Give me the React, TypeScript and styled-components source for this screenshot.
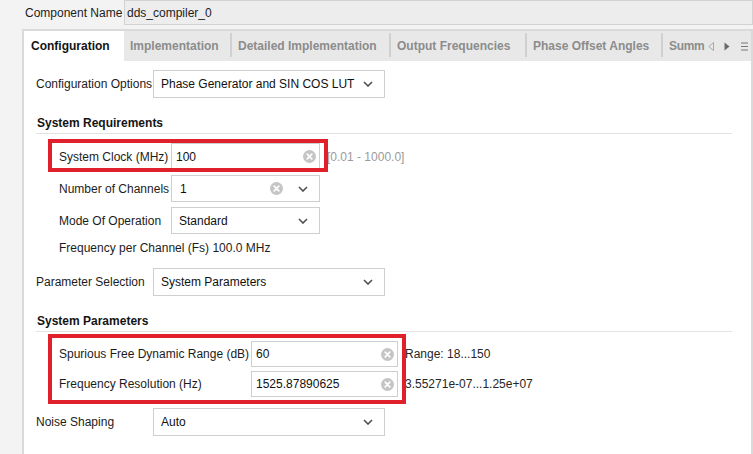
import React from 'react';
import styled, { createGlobalStyle } from 'styled-components';

const GlobalStyle = createGlobalStyle`
  html, body {
    margin: 0;
    padding: 0;
    background: #f3f3f3;
  }
  body {
    font-family: "Liberation Sans", Arial, sans-serif;
    font-size: 12px;
    color: #1c1c1c;
    overflow: hidden;
  }
`;

const Page = styled.div`
  width: 753px;
  height: 454px;
  overflow: hidden;
  background: #f3f3f3;
`;

const NameRow = styled.div`
  display: flex;
  align-items: center;
  height: 25px;
  padding-left: 25px;
`;

const NameLabel = styled.span`
  width: 99px;
`;

const NameInput = styled.div`
  flex: 1;
  height: 25px;
  box-sizing: border-box;
  border: 1px solid #d2d2d2;
  background: #ededed;
  display: flex;
  align-items: center;
  padding-left: 2px;
`;

const Panel = styled.div`
  margin: 4px 0 0 22px;
  height: 440px;
  border: 2px solid #dadada;
  display: flex;
  flex-direction: column;
`;

const TabBar = styled.div`
  display: flex;
  height: 30px;
  background: #e8e8e8;
`;

const Tab = styled.div<{ $w?: number; $active?: boolean }>`
  ${p => (p.$w ? `width: ${p.$w}px;` : 'flex: 1; min-width: 0;')}
  box-sizing: border-box;
  display: flex;
  align-items: center;
  padding-left: ${p => (p.$active ? 7 : 6)}px;
  font-weight: bold;
  white-space: nowrap;
  color: ${p => (p.$active ? '#141414' : '#8c8c8c')};
  background: ${p => (p.$active ? '#ffffff' : 'transparent')};
`;

const TabSep = styled.span`
  width: 2px;
  margin: 2px 0 4px;
  background: #d0d0d0;
`;

const ShortLabel = styled.span`
  flex: 1;
  letter-spacing: -0.3px;
`;

const TabNav = styled.div`
  display: flex;
  align-items: center;
  flex-shrink: 0;
  padding-right: 3px;
`;

const NavIcon = styled.svg<{ $ml: number }>`
  margin-left: ${p => p.$ml}px;
  display: block;
`;

const Content = styled.div`
  flex: 1;
  background: #ffffff;
  padding: 9px 19px 0 12px;
  display: flex;
  flex-direction: column;
`;

const TopField = styled.div<{ $mt?: number }>`
  display: grid;
  grid-template-columns: 117px 232px;
  align-items: center;
  margin-top: ${p => p.$mt ?? 0}px;
`;

const Label = styled.span`
  white-space: nowrap;
`;

const Box = styled.div<{ $h: number; $pl: number }>`
  height: ${p => p.$h}px;
  box-sizing: border-box;
  border: 1px solid #cfcfcf;
  background: #ffffff;
  display: flex;
  align-items: center;
  padding: 0 0 0 ${p => p.$pl}px;
  color: #111;
`;

const BoxText = styled.span`
  flex: 1;
  white-space: nowrap;
`;

const IconSlot = styled.span<{ $pr: number }>`
  display: flex;
  align-items: center;
  margin-right: ${p => p.$pr}px;
`;

const Heading = styled.div<{ $mt: number }>`
  margin-top: ${p => p.$mt}px;
  line-height: 14px;
  padding: 0 0 3px 1px;
  border-bottom: 1px solid #e2e2e2;
  font-weight: bold;
  color: #141414;
`;

const SubGrid = styled.div<{ $label: number; $input: number; $rowH: number; $gap: number; $mt: number }>`
  position: relative;
  display: grid;
  grid-template-columns: ${p => p.$label}px ${p => p.$input}px auto;
  grid-auto-rows: ${p => p.$rowH}px;
  row-gap: ${p => p.$gap}px;
  align-items: center;
  margin: ${p => p.$mt}px 0 0 23px;
`;

const RangeText = styled.span<{ $muted?: boolean }>`
  padding-left: 7px;
  white-space: nowrap;
  color: ${p => (p.$muted ? '#9b9b9b' : '#262626')};
`;

const Highlight = styled.div<{ $rows: string; $t: number; $b: number }>`
  position: absolute;
  grid-column: 1 / 3;
  grid-row: ${p => p.$rows};
  top: -${p => p.$t}px;
  bottom: -${p => p.$b}px;
  left: -11px;
  right: -8px;
  border: 4px solid #e0202a;
  pointer-events: none;
`;

const InfoLine = styled.div`
  margin: 7px 0 0 23px;
  line-height: 14px;
`;

const ClearIcon = () => (
  <svg width="13" height="13" viewBox="0 0 13 13">
    <circle cx="6.5" cy="6.5" r="6.5" fill="#c5c5c5" />
    <path d="M4.2 4.2 L8.8 8.8 M8.8 4.2 L4.2 8.8" stroke="#fff" strokeWidth="1.7" strokeLinecap="round" />
  </svg>
);

const Chevron = () => (
  <svg width="10" height="6" viewBox="0 0 10 6">
    <polyline points="1,1 5,5 9,1" fill="none" stroke="#4f4f4f" strokeWidth="1.6" />
  </svg>
);

const Select = ({ value, h = 28 }: { value: string; h?: number }) => (
  <Box $h={h} $pl={7}>
    <BoxText>{value}</BoxText>
    <IconSlot $pr={11}>
      <Chevron />
    </IconSlot>
  </Box>
);

const TextField = ({ value, h }: { value: string; h: number }) => (
  <Box $h={h} $pl={4}>
    <BoxText>{value}</BoxText>
    <IconSlot $pr={3}>
      <ClearIcon />
    </IconSlot>
  </Box>
);

const Combo = ({ value, h }: { value: string; h: number }) => (
  <Box $h={h} $pl={8}>
    <BoxText>{value}</BoxText>
    <IconSlot $pr={15}>
      <ClearIcon />
    </IconSlot>
    <IconSlot $pr={11}>
      <Chevron />
    </IconSlot>
  </Box>
);

const tabs = [
  { label: 'Implementation', w: 106 },
  { label: 'Detailed Implementation', w: 157 },
  { label: 'Output Frequencies', w: 134 },
  { label: 'Phase Offset Angles', w: 134 },
];

const App: React.FC = () => {
  return (
    <Page>
      <GlobalStyle />
      <NameRow>
        <NameLabel>Component Name</NameLabel>
        <NameInput>dds_compiler_0</NameInput>
      </NameRow>
      <Panel>
        <TabBar>
          <Tab $w={100} $active>Configuration</Tab>
          {tabs.map((t, i) => (
            <React.Fragment key={t.label}>
              {i > 0 && <TabSep />}
              <Tab $w={t.w}>{t.label}</Tab>
            </React.Fragment>
          ))}
          <TabSep />
          <Tab>
            <ShortLabel>Summ</ShortLabel>
            <TabNav>
              <NavIcon $ml={3} width="6" height="9" viewBox="0 0 6 9">
                <polygon points="5.5,0.5 0.8,4.5 5.5,8.5" fill="none" stroke="#a8a8a8" strokeWidth="1" />
              </NavIcon>
              <NavIcon $ml={10} width="6" height="9" viewBox="0 0 6 9">
                <polygon points="0.5,0.5 5.5,4.5 0.5,8.5" fill="#6a6a6a" />
              </NavIcon>
              <NavIcon $ml={11} width="7" height="9" viewBox="0 0 7 9">
                <path d="M0 1 H7 M0 4.5 H7 M0 8 H7" stroke="#7a7a7a" strokeWidth="1.2" />
              </NavIcon>
            </TabNav>
          </Tab>
        </TabBar>
        <Content>
          <TopField>
            <Label>Configuration Options</Label>
            <Select value="Phase Generator and SIN COS LUT" />
          </TopField>

          <Heading $mt={18}>System Requirements</Heading>
          <SubGrid $label={112} $input={149} $rowH={27} $gap={5} $mt={9}>
            <Label>System Clock (MHz)</Label>
            <TextField value="100" h={27} />
            <RangeText $muted>[0.01 - 1000.0]</RangeText>
            <Label>Number of Channels</Label>
            <Combo value="1" h={27} />
            <span />
            <Label>Mode Of Operation</Label>
            <Select value="Standard" h={27} />
            <span />
            <Highlight $rows="1 / 2" $t={4} $b={2} />
          </SubGrid>
          <InfoLine>Frequency per Channel (Fs) 100.0 MHz</InfoLine>

          <TopField $mt={13}>
            <Label>Parameter Selection</Label>
            <Select value="System Parameters" />
          </TopField>

          <Heading $mt={18}>System Parameters</Heading>
          <SubGrid $label={192} $input={147} $rowH={26} $gap={4} $mt={9}>
            <Label>Spurious Free Dynamic Range (dB)</Label>
            <TextField value="60" h={26} />
            <RangeText>Range: 18...150</RangeText>
            <Label>Frequency Resolution (Hz)</Label>
            <TextField value="1525.87890625" h={26} />
            <RangeText>3.55271e-07...1.25e+07</RangeText>
            <Highlight $rows="1 / 3" $t={7} $b={7} />
          </SubGrid>

          <TopField $mt={11}>
            <Label>Noise Shaping</Label>
            <Select value="Auto" />
          </TopField>
        </Content>
      </Panel>
    </Page>
  );
};

export default App;
